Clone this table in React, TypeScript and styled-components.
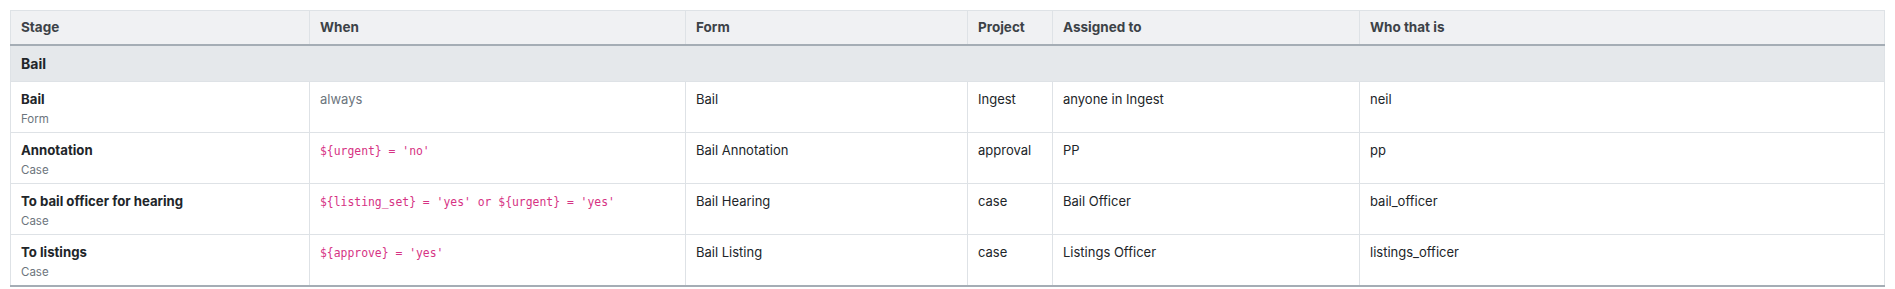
import styled, { createGlobalStyle } from 'styled-components'

const GlobalStyle = createGlobalStyle`
  html, body {
    margin: 0;
    padding: 0;
    background: #ffffff;
  }
  body {
    font-family: Inter, "Liberation Sans", Arial, sans-serif;
    color: #212529;
  }
`

const Page = styled.div`
  padding: 10px;
`

const Table = styled.table`
  width: 100%;
  border-collapse: collapse;
  table-layout: fixed;
  font-size: 13px;
  border-top: 1px solid #dee2e6;
  border-bottom: 2px solid #a5adb5;
`

const HeadCell = styled.th`
  background: #f0f1f3;
  color: #3c4247;
  font-weight: 700;
  font-size: 13.5px;
  text-align: left;
  padding: 8px 10px;
  height: 17px;
  line-height: 17px;
  border: 1px solid #dee2e6;
  border-top: none;
  border-bottom: 2px solid #a5adb5;
`

const GroupCell = styled.td`
  background: #e5e8eb;
  font-weight: 700;
  font-size: 14px;
  color: #212529;
  padding: 8px 10px;
  height: 19px;
  line-height: 19px;
  border: 1px solid #dee2e6;
  border-top: none;
`

const Cell = styled.td`
  vertical-align: top;
  padding: 8px 10px 4px;
  height: 38px;
  line-height: 18px;
  border: 1px solid #dee2e6;
  color: #212529;
`

const Title = styled.div`
  font-weight: 700;
  font-size: 13.2px;
`

const Sub = styled.div`
  margin-top: 3px;
  font-size: 11.5px;
  line-height: 17px;
  color: #6c757d;
`

const Muted = styled.span`
  color: #6c757d;
`

const Code = styled.code`
  font-family: "DejaVu Sans Mono", "Liberation Mono", monospace;
  font-size: 11.4px;
  color: #d63384;
`

type Row = {
  stage: string
  kind: string
  when: string | null
  form: string
  project: string
  assigned: string
  who: string
}

const rows: Row[] = [
  { stage: 'Bail', kind: 'Form', when: null, form: 'Bail', project: 'Ingest', assigned: 'anyone in Ingest', who: 'neil' },
  { stage: 'Annotation', kind: 'Case', when: "${urgent} = 'no'", form: 'Bail Annotation', project: 'approval', assigned: 'PP', who: 'pp' },
  { stage: 'To bail officer for hearing', kind: 'Case', when: "${listing_set} = 'yes' or ${urgent} = 'yes'", form: 'Bail Hearing', project: 'case', assigned: 'Bail Officer', who: 'bail_officer' },
  { stage: 'To listings', kind: 'Case', when: "${approve} = 'yes'", form: 'Bail Listing', project: 'case', assigned: 'Listings Officer', who: 'listings_officer' },
]

export default function App() {
  return (
    <Page>
      <GlobalStyle />
      <Table>
        <colgroup>
          <col style={{ width: 299 }} />
          <col style={{ width: 376 }} />
          <col style={{ width: 282 }} />
          <col style={{ width: 85 }} />
          <col style={{ width: 307 }} />
          <col />
        </colgroup>
        <thead>
          <tr>
            <HeadCell>Stage</HeadCell>
            <HeadCell>When</HeadCell>
            <HeadCell>Form</HeadCell>
            <HeadCell>Project</HeadCell>
            <HeadCell>Assigned to</HeadCell>
            <HeadCell>Who that is</HeadCell>
          </tr>
        </thead>
        <tbody>
          <tr>
            <GroupCell colSpan={6}>Bail</GroupCell>
          </tr>
          {rows.map((r) => (
            <tr key={r.stage}>
              <Cell>
                <Title>{r.stage}</Title>
                <Sub>{r.kind}</Sub>
              </Cell>
              <Cell>{r.when ? <Code>{r.when}</Code> : <Muted>always</Muted>}</Cell>
              <Cell>{r.form}</Cell>
              <Cell>{r.project}</Cell>
              <Cell>{r.assigned}</Cell>
              <Cell>{r.who}</Cell>
            </tr>
          ))}
        </tbody>
      </Table>
    </Page>
  )
}
